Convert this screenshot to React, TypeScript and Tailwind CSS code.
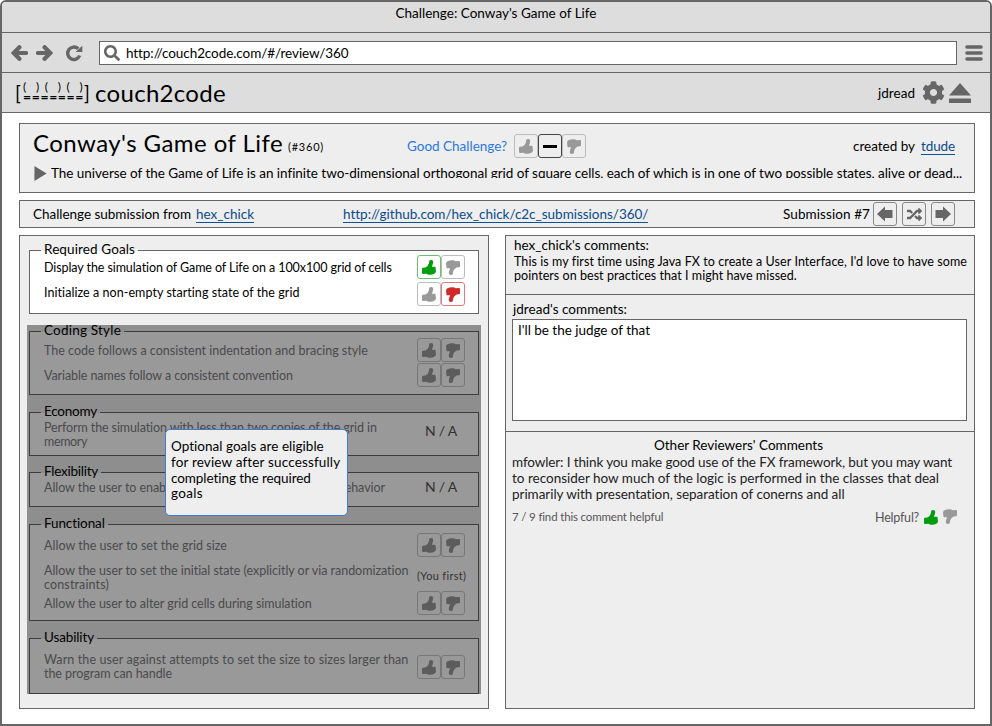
import { useLayoutEffect, useRef, useState } from "react";
import type { ReactNode } from "react";
import { FaCog, FaRandom, FaSearch } from "react-icons/fa";

/* Single line of text tracked out to fill the given width. */
function T({ w, className = "", children }: { w: number; className?: string; children: string }) {
  const ref = useRef<HTMLSpanElement>(null);
  const [spacing, setSpacing] = useState(0);
  useLayoutEffect(() => {
    if (ref.current) {
      const natural = ref.current.getBoundingClientRect().width;
      setSpacing((w - natural) / children.length);
    }
  }, []);
  return (
    <span className={`block shrink-0 whitespace-pre leading-4 ${className}`} style={{ width: w }}>
      <span ref={ref} style={{ letterSpacing: spacing }}>
        {children}
      </span>
    </span>
  );
}

function Thumb({ down = false, className = "" }: { down?: boolean; className?: string }) {
  return (
    <svg viewBox="0 0 41 44" className={`h-[15px] w-3.5 shrink-0 ${down ? "rotate-180" : ""} ${className}`} fill="currentColor">
      <path d="M21 3Q22 0 27 0Q33 0 33 6Q32 13 29 20L38 20Q41 21 40 26L41 34Q40 40 35 41Q28 44 21 43Q16 43 13 40L3 41Q0 41 0 38L0 26Q0 23 3 23L10 22Q18 18 20 10Z" />
    </svg>
  );
}

function Arrow({ className = "" }: { className?: string }) {
  return (
    <svg viewBox="0 0 17 16" className={`h-4 w-[17px] shrink-0 ${className}`} fill="none" stroke="currentColor" strokeWidth="4.2" strokeLinecap="round">
      <path d="M8.4 2.2L2.6 8L8.4 13.8M4 8H15" />
    </svg>
  );
}

function Box({ className, children }: { className: string; children: ReactNode }) {
  return (
    <span className={`flex size-6 shrink-0 items-center justify-center rounded-[3px] border ${className}`}>{children}</span>
  );
}

type Vote = "up" | "down" | "none" | "dim";

function Votes({ vote }: { vote: Vote }) {
  const idle = vote === "dim" ? "border-[#777] text-[#5c5c5c]" : "border-[#bcbcbc] text-[#999]";
  return (
    <span className="flex shrink-0">
      <Box className={vote === "up" ? "border-[#66c270] text-[#009e0f]" : idle}>
        <Thumb />
      </Box>
      <Box className={vote === "down" ? "border-[#e07c7c] text-[#cf2a27]" : idle}>
        <Thumb down />
      </Box>
    </span>
  );
}

function Group({ title, w, dim = false, className, children }: { title: string; w: number; dim?: boolean; className: string; children: ReactNode }) {
  const line = dim ? "bg-[#3d3d3d]" : "bg-[#666]";
  return (
    <section className={`flex w-[450px] flex-col ${dim ? "bg-[#999]" : "bg-white"} ${className}`}>
      <div className="flex h-px items-center">
        <span className={`h-px w-3 ${line}`} />
        <span className={`flex h-px items-center px-[3px] ${dim ? "bg-[#8e8e8e]" : "bg-[#eee]"}`}>
          <T w={w} className="-mt-[3px] text-[13.5px] text-black">{title}</T>
        </span>
        <span className={`h-px flex-1 ${line}`} />
      </div>
      <div className={`flex flex-1 flex-col border-x border-b pl-3.5 pr-[13px] ${dim ? "border-[#3d3d3d] text-[#4a4a4c]" : "border-[#666] text-black"}`}>
        {children}
      </div>
    </section>
  );
}

function Goal({ lines, className = "", shift = "mt-px", children }: { lines: [string, number][]; className?: string; shift?: string; children: ReactNode }) {
  return (
    <div className={`flex h-6 items-center justify-between ${className}`}>
      <div className={`flex flex-col ${shift}`}>
        {lines.map(([text, w]) => (
          <T key={text} w={w} className="h-3.5 !leading-[14px] text-[12.5px]">{text}</T>
        ))}
      </div>
      {children}
    </div>
  );
}

function Link({ w, children }: { w: number; children: string }) {
  return <T w={w} className="border-b border-[#0b5394] text-[13.5px] text-[#0b4a8c]">{children}</T>;
}

export default function App() {
  return (
    <div className="h-[726px] w-[992px] overflow-hidden bg-white font-['Lato',sans-serif] text-[13.5px] text-black">
      <div className="flex h-full flex-col overflow-hidden rounded-t-md border-2 border-[#666]">
        <header className="flex h-[31px] shrink-0 justify-center border-b border-[#666] bg-[#ddd] pt-[3px]">
          <T w={201}>Challenge: Conway's Game of Life</T>
        </header>

        <div className="flex h-10 shrink-0 items-center border-b border-[#666] bg-[#ddd] pl-[9px] text-[#666]">
          <Arrow />
          <Arrow className="ml-2 -scale-x-100" />
          <svg viewBox="0 0 18 18" className="ml-3 size-[18px]">
            <path d="M14.7 11.5A6.2 6.2 0 1 1 13.2 4.8" fill="none" stroke="currentColor" strokeWidth="3.4" />
            <path d="M17.3 1.8V8H10.6Z" fill="currentColor" />
          </svg>
          <div className="ml-4 flex h-6 w-[858px] items-center border border-[#666] bg-white pl-1">
            <FaSearch className="size-4" />
            <T w={222} className="ml-1.5 text-black">http://couch2code.com/#/review/360</T>
          </div>
          <svg viewBox="0 0 18 16" className="ml-2 h-4 w-[18px]" stroke="currentColor" strokeWidth="3.6" strokeLinecap="round">
            <path d="M2 2H16M2 8H16M2 14H16" />
          </svg>
        </div>

        <div className="flex h-10 shrink-0 items-center border-b border-[#666] bg-[#ddd] pl-3">
          <div className="flex w-[81px] items-center">
            <T w={7} className="pl-px text-[19px]">[</T>
            <div className="-mt-1 flex flex-col pl-[2px]">
              <T w={61} className="h-3 !leading-[12px] text-[12px]">{"(  ) (  ) (  )"}</T>
              <T w={61} className="h-2 !leading-[8px] text-[14px] font-bold">=======</T>
            </div>
            <T w={6} className="text-[19px]">]</T>
          </div>
          <T w={131} className="text-[24px] !leading-7">couch2code</T>
          <T w={37} className="ml-auto mr-[7px]">jdread</T>
          <FaCog className="size-[23px] text-[#666]" />
          <svg viewBox="0 0 22 20" className="ml-1 mr-[19px] h-5 w-[22px] text-[#666]" fill="currentColor">
            <path d="M11 0L22 12.5H0ZM0 15.5H22V20H0Z" />
          </svg>
        </div>

        <main className="flex flex-1 flex-col px-[17px] pt-2.5">
          <section className="flex h-[70px] w-[956px] flex-col border border-[#666] bg-[#eee] pl-[13px]">
            <div className="flex h-11 items-center">
              <T w={250} className="mt-[-7px] text-[24px] !leading-7">Conway's Game of Life</T>
              <T w={36} className="ml-[5px] mt-0.5 text-[11px]">(#360)</T>
              <T w={100} className="ml-[83px] text-[#2b78e4]">Good Challenge?</T>
              <div className="ml-[7px] flex">
                <Box className="border-[#bcbcbc] text-[#999]"><Thumb /></Box>
                <Box className="border-[#444]"><span className="h-[3px] w-3.5 bg-black" /></Box>
                <Box className="border-[#bcbcbc] text-[#999]"><Thumb down /></Box>
              </div>
              <T w={62} className="ml-[267px]">created by</T>
              <span className="ml-1.5"><Link w={34}>tdude</Link></span>
            </div>
            <div className="mt-[-3px] flex h-[18px] items-start pl-px">
              <svg viewBox="0 0 13 16" className="mt-px h-[15px] w-[13px] shrink-0">
                <path d="M0 0L13 8L0 16Z" fill="#666" />
              </svg>
              <div className="ml-1 h-[13px] overflow-hidden">
                <T w={911}>The universe of the Game of Life is an infinite two-dimensional orthogonal grid of square cells, each of which is in one of two possible states, alive or dead...</T>
              </div>
            </div>
          </section>

          <section className="mt-[7px] flex h-7 w-[956px] shrink-0 items-center border border-[#666] bg-[#eee] pl-[13px]">
            <T w={158}>Challenge submission from</T>
            <span className="ml-[5px]"><Link w={58}>hex_chick</Link></span>
            <span className="ml-[89px]"><Link w={305}>http://github.com/hex_chick/c2c_submissions/360/</Link></span>
            <T w={87} className="ml-[135px]">Submission #7</T>
            <div className="ml-[3px] flex gap-[5px] text-[#666]">
              <Box className="border-[#888]">
                <svg viewBox="0 0 16 16" className="size-4" fill="currentColor"><path d="M0 8L8 0.5V4H15.5V12H8V15.5Z" /></svg>
              </Box>
              <Box className="border-[#888]"><FaRandom className="size-[15px]" /></Box>
              <Box className="border-[#888]">
                <svg viewBox="0 0 16 16" className="size-4" fill="currentColor"><path d="M16 8L8 0.5V4H0.5V12H8V15.5Z" /></svg>
              </Box>
            </div>
          </section>

          <div className="mt-[7px] flex gap-4">
            <section className="relative flex h-[474px] w-[470px] shrink-0 flex-col items-start border border-[#666] bg-[#eee] pl-[7px] pt-3.5">
              <Group title="Required Goals" w={91} className="ml-0.5 h-16 shrink-0">
                <Goal className="mt-1" lines={[["Display the simulation of Game of Life on a 100x100 grid of cells", 348]]}><Votes vote="up" /></Goal>
                <Goal className="mt-[3px]" shift="-mt-[3px]" lines={[["Initialize a non-empty starting state of the grid", 256]]}><Votes vote="down" /></Goal>
              </Group>

              <div className="mt-[11px] flex h-[369px] w-[454px] shrink-0 flex-col items-center bg-[#8e8e8e] pt-1.5">
                <Group dim title="Coding Style" w={77} className="h-16">
                  <Goal className="mt-1.5" lines={[["The code follows a consistent indentation and bracing style", 324]]}><Votes vote="dim" /></Goal>
                  <Goal className="mt-px" lines={[["Variable names follow a consistent convention", 249]]}><Votes vote="dim" /></Goal>
                </Group>
                <Group dim title="Economy" w={53} className="mt-[17px] h-11">
                  <Goal className="mt-[9px]" lines={[["Perform the simulation with less than two copies of the grid in", 333], ["memory", 43]]}>
                    <T w={32} className="mr-2 mt-[-7px] text-sm text-[#333]">N / A</T>
                  </Goal>
                </Group>
                <Group dim title="Flexibility" w={54} className="mt-4 h-[35px]">
                  <Goal className="mt-0.5" lines={[["Allow the user to enable or disable the edge wrapping behavior", 341]]}>
                    <T w={32} className="mr-2 text-sm text-[#333]">N / A</T>
                  </Goal>
                </Group>
                <Group dim title="Functional" w={61} className="mt-[17px] h-[97px]">
                  <Goal className="mt-2" lines={[["Allow the user to set the grid size", 183]]}><Votes vote="dim" /></Goal>
                  <Goal className="mt-2" lines={[["Allow the user to set the initial state (explicitly or via randomization", 365], ["constraints)", 65]]}>
                    <T w={49} className="mr-[-1px] mt-[-2px] text-[11px] text-[#333]">(You first)</T>
                  </Goal>
                  <Goal className="mt-0.5" lines={[["Allow the user to alter grid cells during simulation", 268]]}><Votes vote="dim" /></Goal>
                </Group>
                <Group dim title="Usability" w={50} className="mt-[17px] h-14">
                  <Goal className="mt-4" shift="-mt-px" lines={[["Warn the user against attempts to set the size to sizes larger than", 364], ["the program can handle", 128]]}><Votes vote="dim" /></Goal>
                </Group>
              </div>

              <div className="absolute left-[145px] top-[193px] flex h-[87px] w-[183px] flex-col rounded-[5px] border border-[#3d7cd0] bg-[#eee] pl-[5px] pt-2">
                <T w={153}>Optional goals are eligible</T>
                <T w={169}>for review after successfully</T>
                <T w={140}>completing the required</T>
                <T w={32} className="-mt-px">goals</T>
              </div>
            </section>

            <section className="flex h-[474px] w-[470px] shrink-0 flex-col border border-[#666] bg-[#eee]">
              <div className="h-[59px] border-b border-[#666] pl-2 pt-[1px]">
                <T w={135} className="mb-0.5">hex_chick's comments:</T>
                <T w={453} className="h-3.5 !leading-[14px] text-[12.5px]">This is my first time using Java FX to create a User Interface, I'd love to have some</T>
                <T w={283} className="h-3.5 !leading-[14px] text-[12.5px]">pointers on best practices that I might have missed.</T>
              </div>
              <div className="h-[137px] border-b border-[#666] pl-1.5 pt-1.5">
                <T w={114} className="ml-px">jdread's comments:</T>
                <div className="mt-0.5 h-[102px] w-[455px] border border-[#666] bg-white pl-[5px] pt-0.5">
                  <T w={132}>I'll be the judge of that</T>
                </div>
              </div>
              <div className="pl-1.5 pt-[5px]">
                <T w={169} className="ml-[142px]">Other Reviewers' Comments</T>
                <div className="mt-px text-[#222]">
                  <T w={440}>mfowler: I think you make good use of the FX framework, but you may want</T>
                  <T w={427}>to reconsider how much of the logic is performed in the classes that deal</T>
                  <T w={333}>primarily with presentation, separation of conerns and all</T>
                </div>
                <div className="mt-[7px] flex items-center text-[#555]">
                  <T w={151} className="-mt-px text-[11.5px]">7 / 9 find this comment helpful</T>
                  <T w={44} className="ml-[212px] mt-px text-[12.5px]">Helpful?</T>
                  <Thumb className="ml-[5px] text-[#009e0f]" />
                  <Thumb down className="-mt-0.5 ml-[5px] text-[#999]" />
                </div>
              </div>
            </section>
          </div>
        </main>
      </div>
    </div>
  );
}
